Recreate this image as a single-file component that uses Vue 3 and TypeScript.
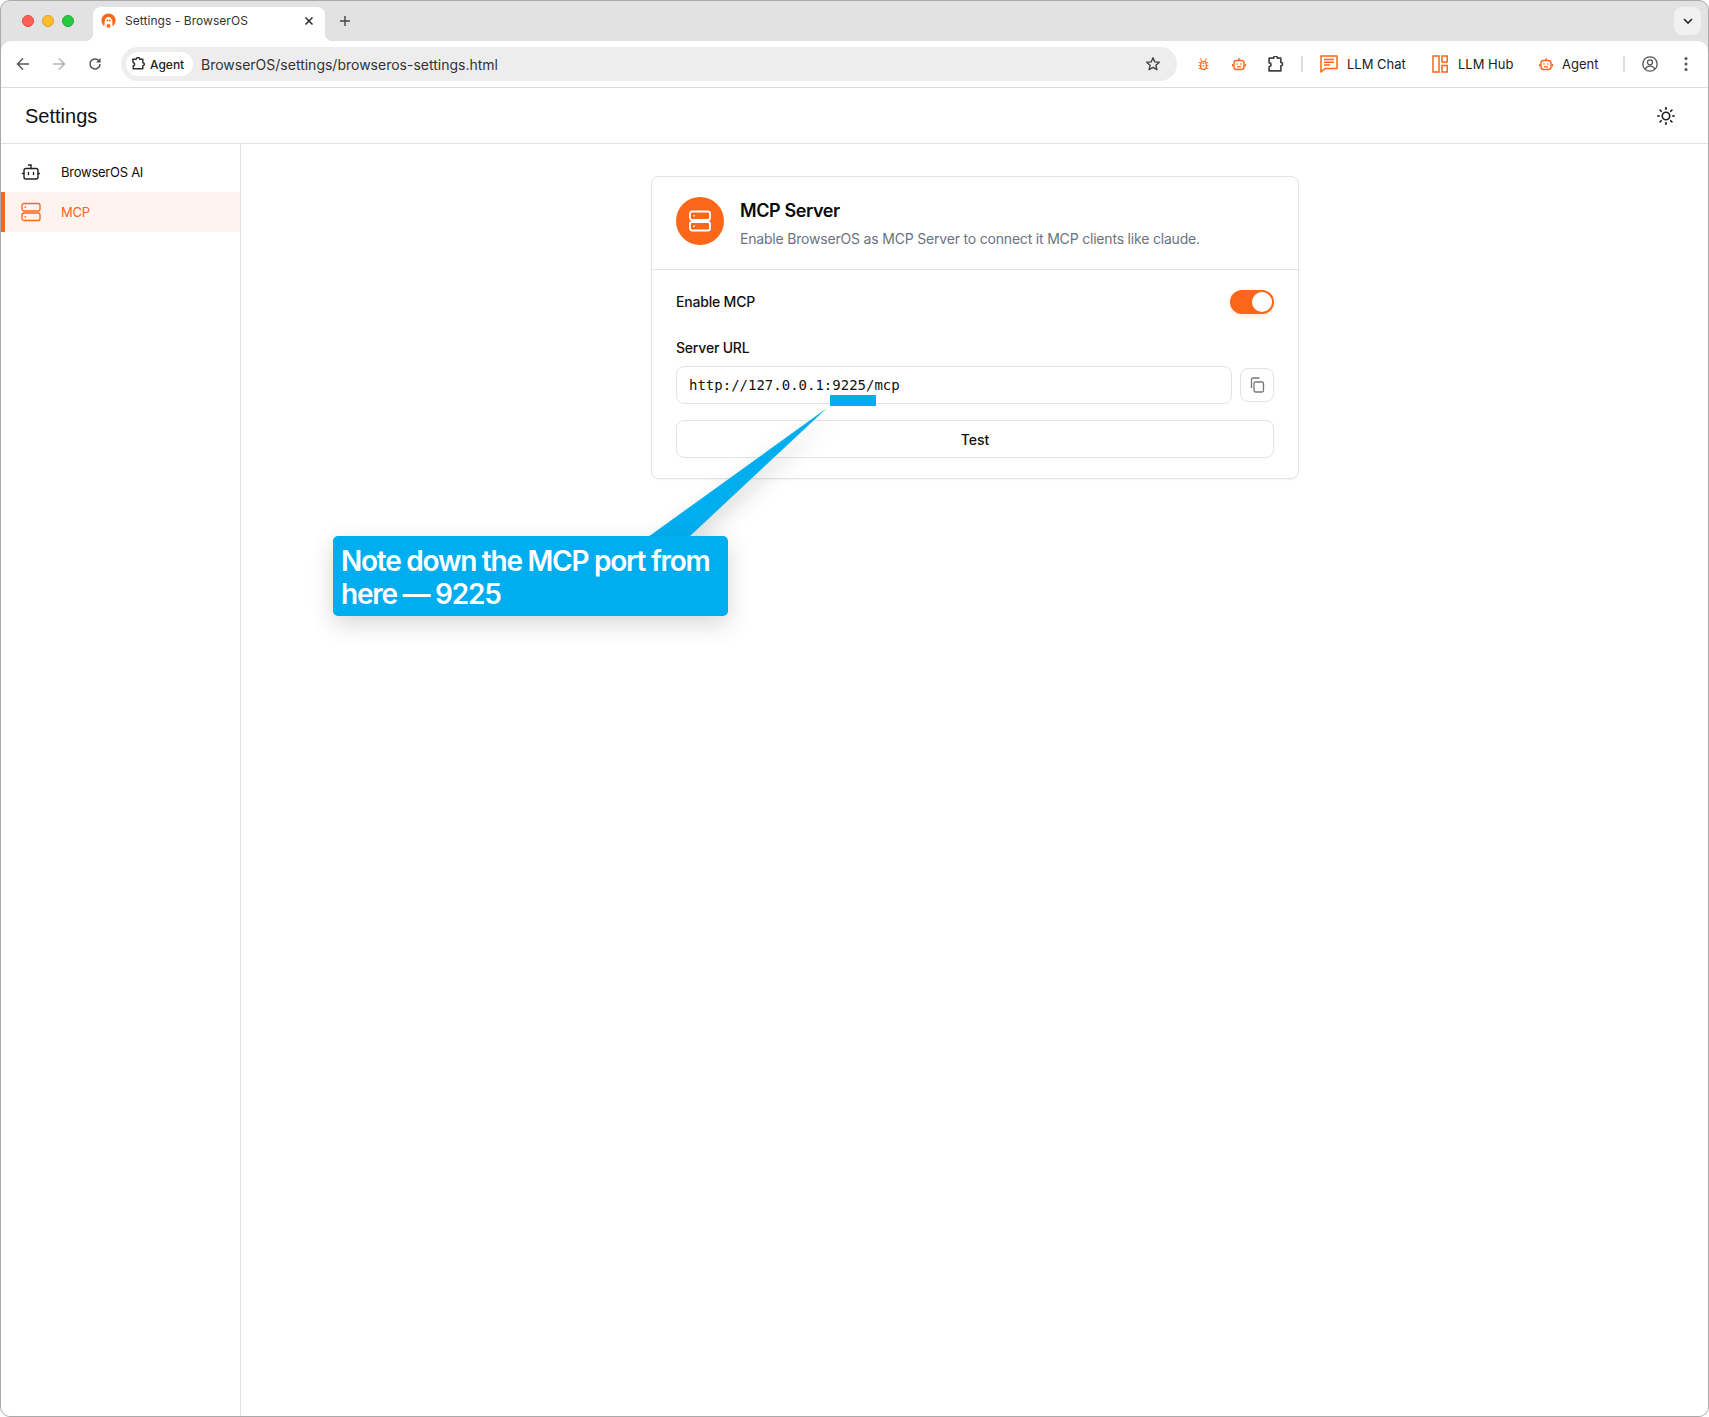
<template>
  <div class="window">
    <div class="tabstrip">
      <div class="lights">
        <span class="light red"></span>
        <span class="light yellow"></span>
        <span class="light green"></span>
      </div>
      <div class="tab">
        <svg class="favicon" viewBox="0 0 16 16" width="15" height="15">
          <circle cx="8" cy="8" r="7.600" fill="#fb6618" />
          <path d="M3.600 14.500 4 8.400C4.200 5.600 6 4.200 8 4.200s3.800 1.400 4 4.200l.4 6.100-2.300.6-.5-3.200H6.400l-.5 3.200z" fill="#fff" />
          <circle cx="6.800" cy="8" r="1" fill="#fb6618" />
          <circle cx="9.300" cy="8" r="1" fill="#fb6618" />
        </svg>
        <span class="tab-title">Settings - BrowserOS</span>
        <svg class="tab-close" viewBox="0 0 10 10" width="10" height="10">
          <path d="M1.500 1.500l7 7M8.500 1.500l-7 7" stroke="#2a2a2a" stroke-width="1.500" fill="none" />
        </svg>
      </div>
      <svg class="tab-plus" viewBox="0 0 12 12" width="12" height="12">
        <path d="M6 1v10M1 6h10" stroke="#444" stroke-width="1.400" fill="none" />
      </svg>
      <div class="tab-menu">
        <svg viewBox="0 0 10 6" width="10" height="6">
          <path d="M1 1l4 4 4-4" stroke="#222" stroke-width="1.600" fill="none" />
        </svg>
      </div>
    </div>

    <div class="toolbar">
      <div class="slot first">
        <svg viewBox="0 0 14 14" width="14" height="14"><path d="M13 7H1.800M7 1.500 1.500 7 7 12.500" stroke="#555" stroke-width="1.500" fill="none" /></svg>
      </div>
      <div class="slot">
        <svg viewBox="0 0 14 14" width="14" height="14"><path d="M1 7h11.200M7 1.500 12.500 7 7 12.500" stroke="#b4b4b4" stroke-width="1.500" fill="none" /></svg>
      </div>
      <div class="slot">
        <svg viewBox="0 0 14 14" width="14" height="14"><path d="M12 7a5 5 0 1 1-1.500-3.600L12 5" stroke="#555" stroke-width="1.500" fill="none" /><path d="M12.600 1v4.600H8z" fill="#555" /></svg>
      </div>
      <div class="omnibox">
        <div class="chip">
          <svg class="puzzle-small" viewBox="0 0 16 16" width="14" height="14">
            <path d="M2 2.500h4a2 2 0 0 1 4 0h3.500v4a1.700 1.700 0 0 1 0 3.400v3.600H2.500V10a1.700 1.700 0 0 0 0-3.400z" stroke="#333" stroke-width="1.700" fill="none" stroke-linejoin="round" />
          </svg>
          <span>Agent</span>
        </div>
        <span class="url">BrowserOS/settings/browseros-settings.html</span>
        <svg class="star" viewBox="0 0 16 16" width="16" height="16">
          <path d="M8 1.800l1.800 4.100 4.500.4-3.400 3 1 4.400L8 11.400l-3.900 2.300 1-4.400-3.400-3 4.500-.4z" stroke="#444" stroke-width="1.400" fill="none" stroke-linejoin="round" />
        </svg>
      </div>
      <div class="slot bug-slot">
        <svg viewBox="0 0 12 16" width="11" height="15">
          <rect x="3" y="4.500" width="6" height="9" rx="3" stroke="#fb6618" stroke-width="1.300" fill="none" />
          <path d="M5 7h2M5 9.500h2M3.800 4 2.800 1.500M8.200 4l1-2.500M3 6.500 .8 5.500M9 6.500l2.200-1M3 9H.6M9 9h2.400M3 11.500l-2.200 1M9 11.500l2.200 1" stroke="#fb6618" stroke-width="1.100" fill="none" />
        </svg>
      </div>
      <div class="slot">
        <svg viewBox="0 0 14 14" width="14" height="14">
          <rect x="2" y="3.500" width="10" height="9" rx="2.500" stroke="#fb6618" stroke-width="1.400" fill="none" />
          <path d="M7 1v2.500M.6 7v2.500M13.400 7v2.500M5 9.800h4" stroke="#fb6618" stroke-width="1.300" fill="none" />
          <circle cx="5" cy="7" r=".8" fill="#fb6618" /><circle cx="9" cy="7" r=".8" fill="#fb6618" />
        </svg>
      </div>
      <div class="slot">
        <svg viewBox="0 0 16 16" width="17" height="17">
          <path d="M2 2h4.200a1.800 1.800 0 0 1 3.600 0H13v4a1.600 1.600 0 0 1 0 3.200V14H2V10a1.800 1.800 0 0 0 0-3.600z" stroke="#444" stroke-width="1.600" fill="none" stroke-linejoin="round" />
        </svg>
      </div>
      <span class="sep sep-a"></span>
      <div class="ext chat">
        <svg viewBox="0 0 18 18" width="18" height="18">
          <path d="M1 1h16v12.500H5L1 17z" stroke="#fb6618" stroke-width="1.500" fill="none" stroke-linejoin="round" />
          <path d="M4 4.600h10M4 7.300h10M4 10h6" stroke="#fb6618" stroke-width="1.500" fill="none" />
        </svg>
        <span>LLM Chat</span>
      </div>
      <div class="ext hub">
        <svg viewBox="0 0 16 18" width="16" height="18">
          <rect x="1" y="1" width="6" height="16" stroke="#fb6618" stroke-width="1.500" fill="none" />
          <rect x="10" y="1" width="5.200" height="6" stroke="#fb6618" stroke-width="1.500" fill="none" />
          <rect x="10" y="10.500" width="5.200" height="6.500" stroke="#fb6618" stroke-width="1.500" fill="none" />
        </svg>
        <span>LLM Hub</span>
      </div>
      <div class="ext agent">
        <svg viewBox="0 0 14 14" width="14" height="14">
          <rect x="2" y="3.500" width="10" height="9" rx="2.500" stroke="#fb6618" stroke-width="1.400" fill="none" />
          <path d="M7 1v2.500M.6 7v2.500M13.400 7v2.500M5 9.800h4" stroke="#fb6618" stroke-width="1.300" fill="none" />
          <circle cx="5" cy="7" r=".8" fill="#fb6618" /><circle cx="9" cy="7" r=".8" fill="#fb6618" />
        </svg>
        <span>Agent</span>
      </div>
      <span class="sep"></span>
      <div class="slot profile">
        <svg viewBox="0 0 16 16" width="16" height="16">
          <circle cx="8" cy="8" r="7.200" stroke="#555" stroke-width="1.300" fill="none" />
          <circle cx="8" cy="6.300" r="2.500" stroke="#555" stroke-width="1.300" fill="none" />
          <path d="M3.300 13c1-2 2.800-2.800 4.700-2.800s3.700.8 4.700 2.800" stroke="#555" stroke-width="1.300" fill="none" />
        </svg>
      </div>
      <div class="slot">
        <svg viewBox="0 0 4 16" width="4" height="16">
          <circle cx="2" cy="2.500" r="1.500" fill="#555" /><circle cx="2" cy="8" r="1.500" fill="#555" /><circle cx="2" cy="13.500" r="1.500" fill="#555" />
        </svg>
      </div>
    </div>

    <header class="page-head">
      <h1>Settings</h1>
      <svg viewBox="0 0 24 24" width="20" height="20" fill="none" stroke="#222" stroke-width="2" stroke-linecap="round">
        <circle cx="12" cy="12" r="4.500" />
        <path d="M12 2v2M12 20v2M2 12h2M20 12h2M4.900 4.900l1.400 1.400M17.700 17.700l1.400 1.400M4.900 19.100l1.400-1.400M17.700 6.300l1.400-1.400" />
      </svg>
    </header>

    <div class="body">
      <nav class="sidebar">
        <div class="nav-item">
          <svg viewBox="0 0 20 20" width="20" height="20" fill="none" stroke="#222" stroke-width="1.400" stroke-linecap="round">
            <rect x="3" y="6.500" width="14" height="10.500" rx="2" />
            <path d="M10 6.500V3H7.500M1.500 11.500H3M17 11.500h1.500M7.500 10.500v2M12.500 10.500v2" />
          </svg>
          <span>BrowserOS AI</span>
        </div>
        <div class="nav-item active">
          <svg viewBox="0 0 20 20" width="20" height="20" fill="none" stroke="#fb6618" stroke-width="1.300" stroke-linecap="round">
            <rect x="1" y="1.500" width="18" height="7.500" rx="2" />
            <rect x="1" y="11" width="18" height="7.500" rx="2" />
            <path d="M4 5.250h.5M4 14.750h.5" />
          </svg>
          <span>MCP</span>
        </div>
      </nav>

      <main class="content">
        <section class="card">
          <div class="card-head">
            <div class="card-icon">
              <svg viewBox="0 0 24 24" width="24" height="24" fill="none" stroke="#fff" stroke-width="1.800" stroke-linecap="round">
                <rect x="2" y="2.500" width="20" height="8.500" rx="2" />
                <rect x="2" y="13" width="20" height="8.500" rx="2" />
                <path d="M6 6.750h.01M6 17.250h.01" />
              </svg>
            </div>
            <div class="card-copy">
              <h2>MCP Server</h2>
              <p>Enable BrowserOS as MCP Server to connect it MCP clients like claude.</p>
            </div>
          </div>
          <div class="card-body">
            <div class="enable-row">
              <span class="label">Enable MCP</span>
              <div class="toggle"><span class="knob"></span></div>
            </div>
            <div class="label url-label">Server URL</div>
            <div class="url-row">
              <div class="url-input">{{ serverUrl }}</div>
              <button class="copy-btn" type="button">
                <svg viewBox="0 0 16 16" width="16" height="16" fill="none" stroke="#777" stroke-width="1.300" stroke-linejoin="round">
                  <rect x="5" y="5" width="9.500" height="10" rx="1.500" />
                  <path d="M2.500 11V2.500A1.500 1.500 0 0 1 4 1h6.500" />
                </svg>
              </button>
            </div>
            <button class="test-btn" type="button">Test</button>
          </div>
        </section>
      </main>
    </div>

    <!-- tutorial annotation drawn over the page -->
    <svg class="tail" viewBox="0 0 190 132" width="190" height="132">
      <polygon points="182,0 3,129 44,129" fill="#00aeef" />
    </svg>
    <div class="highlight"></div>
    <div class="callout">Note down the MCP port from here — 9225</div>
  </div>
</template>

<script setup lang="ts">
const serverUrl = 'http://127.0.0.1:9225/mcp';
</script>

<style>
html,
body {
  margin: 0;
  background: #fff;
}
</style>

<style scoped>
.window {
  position: relative;
  box-sizing: border-box;
  width: 1709px;
  height: 1417px;
  display: flex;
  flex-direction: column;
  overflow: hidden;
  background: #e2e2e2;
  border: 1px solid #aaa;
  border-radius: 10px;
  font-family: Inter, "Liberation Sans", sans-serif;
  color: #111;
}

.tabstrip {
  height: 40px;
  flex: none;
  display: flex;
  align-items: flex-end;
  position: relative;
}

.lights {
  display: flex;
  gap: 8px;
  padding-left: 21px;
  align-self: flex-start;
  padding-top: 14px;
  width: 71px;
}

.light {
  width: 12px;
  height: 12px;
  border-radius: 50%;
  box-sizing: border-box;
}

.red { background: #ff5f57; border: 1px solid #e5483f; }
.yellow { background: #febc2e; border: 1px solid #e0a021; }
.green { background: #28c840; border: 1px solid #1fad33; }

.tab {
  width: 232px;
  height: 34px;
  box-sizing: border-box;
  background: #fff;
  border-radius: 8px 8px 0 0;
  display: flex;
  align-items: center;
  padding: 0 11px 7px 8px;
  position: relative;
}

.tab::before,
.tab::after {
  content: "";
  position: absolute;
  bottom: 0;
  width: 8px;
  height: 8px;
}

.tab::before {
  left: -8px;
  background: radial-gradient(circle at 0 0, transparent 8px, #fff 8.5px);
}

.tab::after {
  right: -8px;
  background: radial-gradient(circle at 100% 0, transparent 8px, #fff 8.5px);
}

.tab-title {
  font-size: 12px;
  margin-left: 9px;
  color: #333;
  letter-spacing: 0.05px;
}

.tab-close {
  margin-left: auto;
}

.tab-plus {
  margin: 0 0 14px 14px;
}

.tab-menu {
  position: absolute;
  right: 7px;
  top: 6px;
  width: 27px;
  height: 28px;
  border-radius: 8px;
  background: #f1f1f1;
  display: flex;
  align-items: center;
  justify-content: center;
}

.toolbar {
  height: 46px;
  flex: none;
  display: flex;
  align-items: center;
  background: #fff;
  border-bottom: 1px solid #dcdcdc;
  border-radius: 10px 10px 0 0;
}

.slot {
  width: 36px;
  height: 36px;
  flex: none;
  display: flex;
  align-items: center;
  justify-content: center;
}

.slot.first {
  margin-left: 4px;
}

.omnibox {
  width: 1056px;
  height: 34px;
  margin-left: 8px;
  flex: none;
  box-sizing: border-box;
  display: flex;
  align-items: center;
  background: #eeeded;
  border-radius: 17px;
  padding: 0 16px 0 5px;
}

.chip {
  height: 24px;
  width: 67px;
  box-sizing: border-box;
  background: #fff;
  border-radius: 12px;
  display: flex;
  align-items: center;
  gap: 5px;
  padding-left: 5px;
  font-size: 12px;
  font-weight: 500;
  color: #222;
}

.url {
  margin-left: 8px;
  font-size: 14px;
  color: #333;
}

.star {
  margin-left: auto;
}

.bug-slot {
  margin-left: 8px;
}

.sep {
  width: 2px;
  height: 16px;
  background: #dedede;
  flex: none;
}

.sep-a {
  margin-left: 8px;
}

.ext {
  display: flex;
  align-items: center;
  flex: none;
  font-size: 13px;
  color: #222;
}

.chat {
  width: 112px;
  margin-left: 17px;
  gap: 9px;
}

.hub {
  width: 107px;
  gap: 10px;
}

.agent {
  width: 84px;
  gap: 9px;
}

.profile {
  margin-left: 7px;
}

.page-head {
  height: 55px;
  flex: none;
  display: flex;
  align-items: center;
  justify-content: space-between;
  background: #fff;
  border-bottom: 1px solid #e2e2e2;
  padding: 0 32px 0 24px;
}

.page-head h1 {
  margin: 2px 0 0;
  font-family: "Liberation Sans", sans-serif;
  font-size: 20px;
  font-weight: 400;
  color: #111;
}

.body {
  flex: 1;
  display: flex;
  background: #fff;
  min-height: 0;
}

.sidebar {
  width: 240px;
  flex: none;
  box-sizing: border-box;
  border-right: 1px solid #e2e2e2;
  padding-top: 8px;
}

.nav-item {
  height: 40px;
  box-sizing: border-box;
  display: flex;
  align-items: center;
  gap: 20px;
  padding-left: 16px;
  border-left: 4px solid transparent;
  font-size: 13px;
  letter-spacing: -0.25px;
  color: #111;
}

.nav-item span {
  margin-top: -1px;
}

.nav-item.active {
  background: #fef3ee;
  border-left-color: #fb6618;
  color: #fb6618;
}

.content {
  flex: 1;
  padding: 32px 0 0 1px;
}

.card {
  width: 648px;
  margin: 0 auto;
  box-sizing: border-box;
  border: 1px solid #e3e3e3;
  border-radius: 8px;
  box-shadow: 0 1px 2px rgba(0, 0, 0, 0.05);
}

.card-head {
  display: flex;
  gap: 16px;
  padding: 20px 24px;
  border-bottom: 1px solid #e3e3e3;
}

.card-icon {
  width: 48px;
  height: 48px;
  flex: none;
  border-radius: 50%;
  background: #fb6618;
  display: flex;
  align-items: center;
  justify-content: center;
}

.card-copy h2 {
  margin: 1px 0 0;
  font-size: 18px;
  line-height: 26px;
  font-weight: 600;
  letter-spacing: -0.4px;
  color: #0a0a0a;
}

.card-copy p {
  margin: 5px 0 0;
  font-size: 14px;
  line-height: 20px;
  letter-spacing: -0.19px;
  color: #6b7280;
}

.card-body {
  padding: 20px 24px 20px;
}

.enable-row {
  height: 24px;
  display: flex;
  align-items: center;
  justify-content: space-between;
}

.label {
  font-size: 14px;
  line-height: 20px;
  font-weight: 500;
  letter-spacing: -0.2px;
  color: #111;
}

.url-label {
  margin-top: 24px;
}

.toggle {
  width: 44px;
  height: 24px;
  box-sizing: border-box;
  background: #fb6618;
  border-radius: 12px;
  padding: 2px;
  display: flex;
  justify-content: flex-end;
  box-shadow: 0 2px 4px rgba(251, 102, 24, 0.15);
}

.knob {
  width: 20px;
  height: 20px;
  border-radius: 50%;
  background: #fff;
}

.url-row {
  margin-top: 8px;
  display: flex;
  align-items: center;
  gap: 8px;
}

.url-input {
  flex: 1;
  height: 38px;
  box-sizing: border-box;
  border: 1px solid #e3e3e3;
  border-radius: 8px;
  padding: 0 12px;
  display: flex;
  align-items: center;
  font-family: "DejaVu Sans Mono", "Liberation Mono", monospace;
  font-size: 14px;
  color: #111;
}

.copy-btn {
  width: 34px;
  height: 34px;
  flex: none;
  padding: 0;
  background: #fff;
  border: 1px solid #e3e3e3;
  border-radius: 8px;
  display: flex;
  align-items: center;
  justify-content: center;
}

.test-btn {
  display: block;
  width: 100%;
  height: 38px;
  margin-top: 16px;
  background: #fff;
  border: 1px solid #e3e3e3;
  border-radius: 8px;
  font-family: inherit;
  font-size: 14px;
  font-weight: 500;
  color: #111;
}

.tail {
  position: absolute;
  left: 644px;
  top: 407px;
  filter: drop-shadow(6px 6px 10px rgba(0, 0, 0, 0.14));
}

.highlight {
  position: absolute;
  left: 829px;
  top: 394px;
  width: 46px;
  height: 11px;
  background: #00aeef;
}

.callout {
  position: absolute;
  left: 332px;
  top: 535px;
  width: 395px;
  height: 80px;
  box-sizing: border-box;
  padding: 9px 8px 0;
  background: #00aeef;
  border-radius: 5px;
  box-shadow: 0 8px 24px rgba(0, 0, 0, 0.16);
  color: #fff;
  font-size: 28px;
  line-height: 33px;
  font-weight: 600;
  letter-spacing: -1.25px;
}
</style>
